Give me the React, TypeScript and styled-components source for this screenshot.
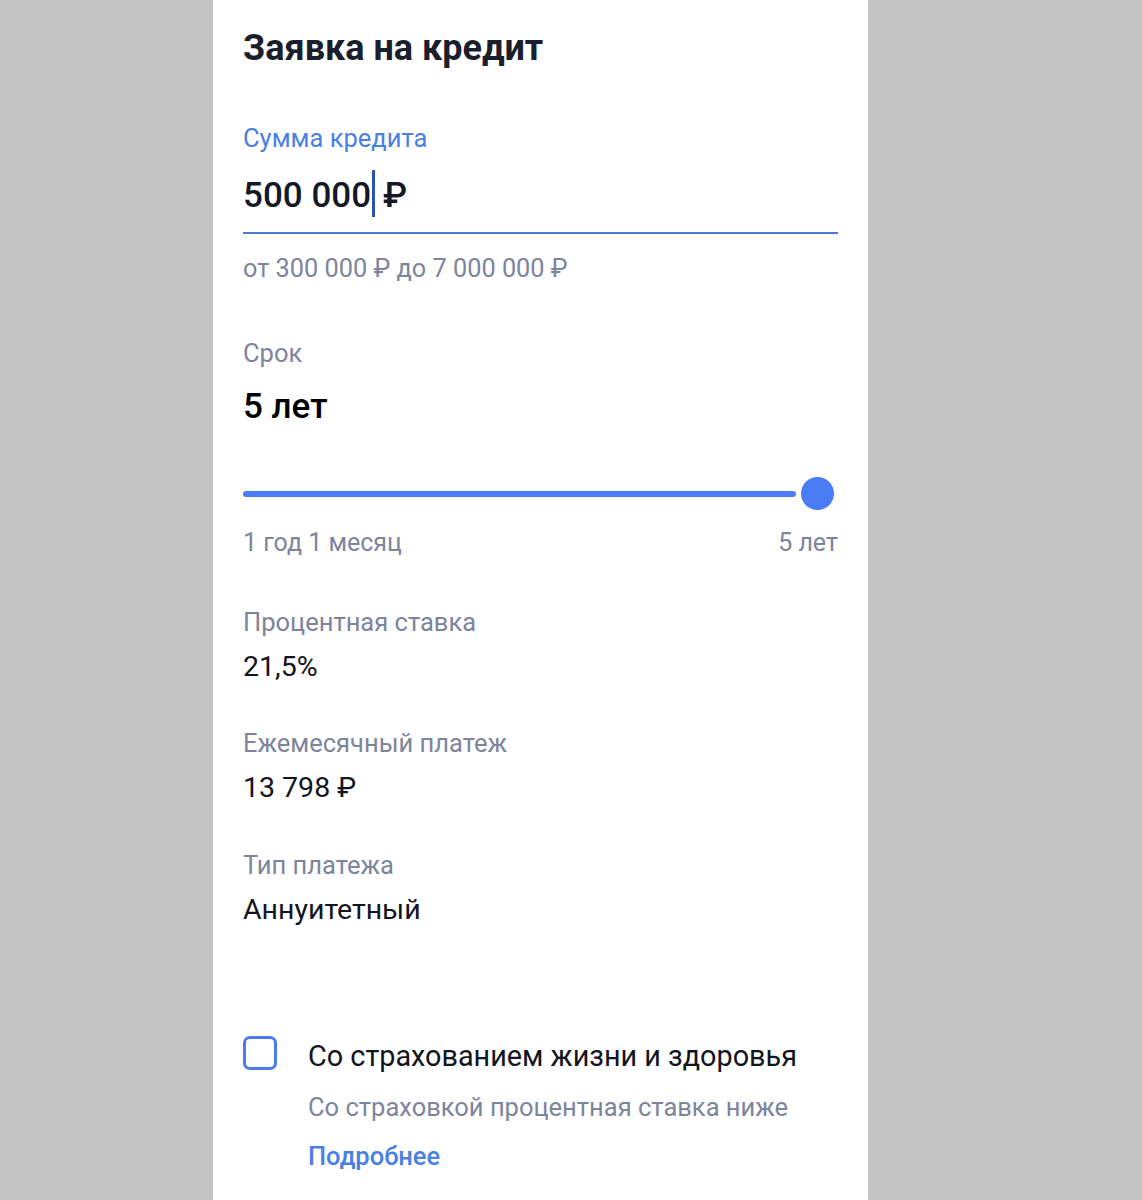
import React from 'react';
import styled, { createGlobalStyle } from 'styled-components';

const GlobalStyle = createGlobalStyle`
	html, body {
		margin: 0;
		padding: 0;
		background: #c4c4c4;
		font-family: Roboto, 'Noto Sans', sans-serif;
	}
`;

const Page = styled.div`
	display: flex;
	min-height: 1200px;
	padding-left: 213px;
`;

const Panel = styled.main`
	width: 655px;
	min-height: 1200px;
	box-sizing: border-box;
	background: #ffffff;
	padding: 25.7px 30px 0 30px;
	display: flex;
	flex-direction: column;
`;

const Title = styled.h1`
	margin: 0;
	font-size: 36px;
	line-height: 44px;
	font-weight: 700;
	color: #1b1e2d;
`;

const Label = styled.div<{ $active?: boolean; $gap: number }>`
	margin-top: ${(p) => p.$gap}px;
	font-size: 25.5px;
	line-height: 30px;
	color: ${(p) => (p.$active ? '#4a7fe4' : '#7d849c')};
`;

const AmountField = styled.div`
	margin-top: 21.2px;
	padding-bottom: 13.5px;
	border-bottom: 2px solid #4a78d6;
	display: flex;
	align-items: center;
	font-size: 35px;
	line-height: 44px;
	font-weight: 500;
	color: #151827;
`;

const Caret = styled.span`
	display: inline-block;
	width: 3px;
	height: 47px;
	margin: -5px 8px 0 1px;
	background: #2b52b8;
`;

const Hint = styled.div`
	margin-top: 20.3px;
	font-size: 25.3px;
	line-height: 30px;
	color: #7d849c;
`;

const TermValue = styled.div`
	margin-top: 17.7px;
	font-size: 35px;
	line-height: 42px;
	font-weight: 500;
	color: #000000;
`;

const SliderWrap = styled.div`
	margin-top: 49.3px;
	height: 34px;
	display: flex;
	align-items: center;
	gap: 5px;
`;

const Track = styled.div`
	flex: 1;
	height: 6px;
	border-radius: 3px;
	background: #4a7cf5;
`;

const Thumb = styled.div`
	width: 33px;
	height: 33px;
	border-radius: 50%;
	background: #4a7cf5;
	margin-right: 4px;
`;

const Range = styled.div`
	margin-top: 17px;
	display: flex;
	justify-content: space-between;
	font-size: 25px;
	line-height: 30px;
	color: #7d849c;
`;

const Value = styled.div`
	margin-top: 13px;
	font-size: 28.5px;
	line-height: 34px;
	color: #121420;
`;

const InsuranceRow = styled.div`
	margin-top: 109px;
	display: flex;
	align-items: flex-start;
	gap: 31px;
`;

const Checkbox = styled.div`
	flex: none;
	width: 34px;
	height: 34px;
	box-sizing: border-box;
	border: 3px solid #4a7cf0;
	border-radius: 7px;
`;

const InsuranceText = styled.div`
	display: flex;
	flex-direction: column;
	padding-top: 2.6px;
`;

const InsuranceTitle = styled.div`
	font-size: 28.8px;
	line-height: 34px;
	color: #121420;
`;

const InsuranceNote = styled.div`
	margin-top: 19.2px;
	font-size: 25.5px;
	line-height: 30px;
	color: #7d849c;
`;

const MoreLink = styled.a`
	margin-top: 19px;
	font-size: 25.5px;
	line-height: 30px;
	font-weight: 500;
	color: #4a7fe4;
	text-decoration: none;
`;

const infoRows = [
	{ label: 'Процентная ставка', value: '21,5%', gap: 49 },
	{ label: 'Ежемесячный платеж', value: '13 798 ₽', gap: 44 },
	{ label: 'Тип платежа', value: 'Аннуитетный', gap: 45 },
];

const App = () => {
	return (
		<>
			<GlobalStyle />
			<Page>
				<Panel>
					<Title>Заявка на кредит</Title>

					<Label $active $gap={53.6}>
						Сумма кредита
					</Label>
					<AmountField>
						500 000
						<Caret />₽
					</AmountField>
					<Hint>от 300 000 ₽ до 7 000 000 ₽</Hint>

					<Label $gap={53.7}>Срок</Label>
					<TermValue>5 лет</TermValue>
					<SliderWrap>
						<Track />
						<Thumb />
					</SliderWrap>
					<Range>
						<span>1 год 1 месяц</span>
						<span>5 лет</span>
					</Range>

					{infoRows.map((row) => (
						<React.Fragment key={row.label}>
							<Label $gap={row.gap}>{row.label}</Label>
							<Value>{row.value}</Value>
						</React.Fragment>
					))}

					<InsuranceRow>
						<Checkbox />
						<InsuranceText>
							<InsuranceTitle>Со страхованием жизни и здоровья</InsuranceTitle>
							<InsuranceNote>Со страховкой процентная ставка ниже</InsuranceNote>
							<MoreLink href="#">Подробнее</MoreLink>
						</InsuranceText>
					</InsuranceRow>
				</Panel>
			</Page>
		</>
	);
};

export default App;
